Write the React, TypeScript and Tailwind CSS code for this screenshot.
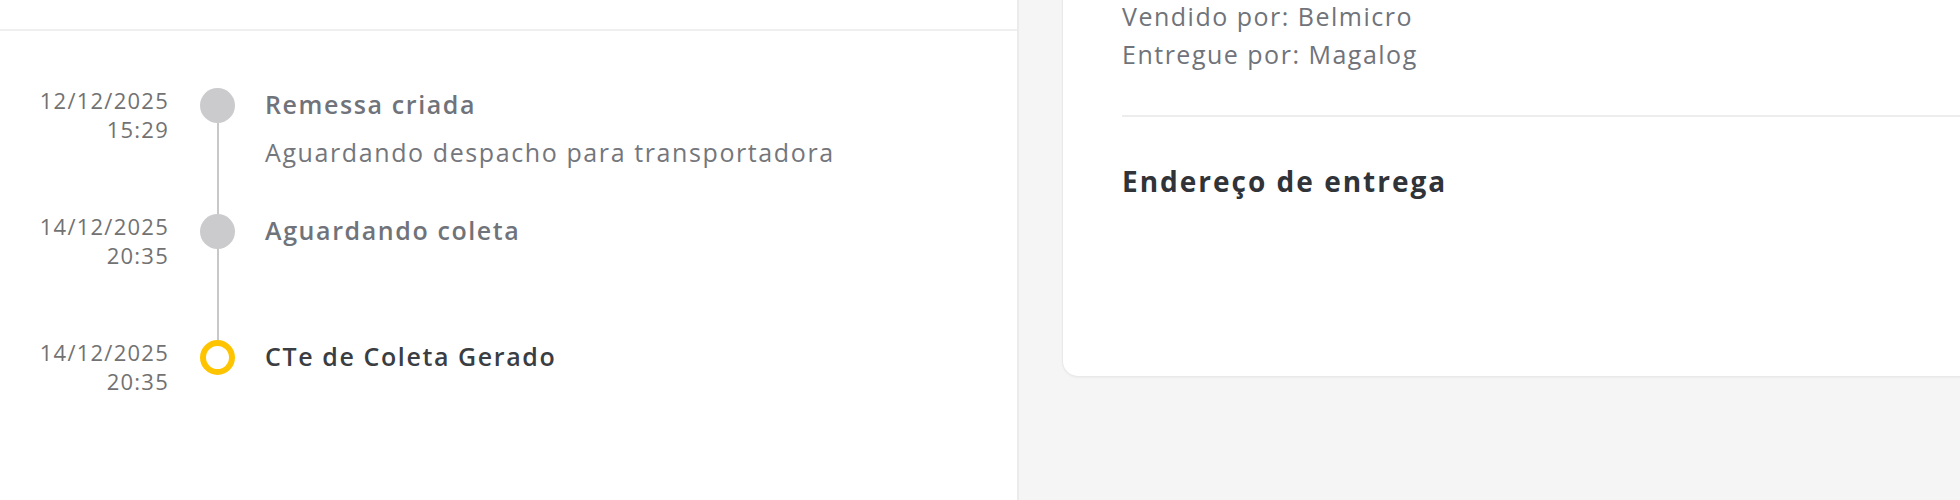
const events = [
  {
    date: "12/12/2025",
    time: "15:29",
    title: "Remessa criada",
    detail: "Aguardando despacho para transportadora",
    current: false,
  },
  { date: "14/12/2025", time: "20:35", title: "Aguardando coleta", current: false },
  { date: "14/12/2025", time: "20:35", title: "CTe de Coleta Gerado", current: true },
];

export default function App() {
  return (
    <div className="flex h-[500px] w-[1960px] overflow-hidden bg-[#f5f5f5] font-['Open_Sans',sans-serif]">
      {/* Tracking timeline */}
      <section className="flex w-[1019px] shrink-0 flex-col border-r-2 border-[#ebebeb] bg-white">
        <div className="h-[31px] shrink-0 border-b-2 border-[#efefef]" />
        <ol className="mt-[57px] flex flex-col">
          {events.map((e, i) => {
            const last = i === events.length - 1;
            return (
              <li key={i} className="flex h-[126px]">
                <div className="-mt-[2px] w-[169px] shrink-0 text-right text-[22px] leading-[29px] tracking-[1.25px] text-[#727272]">
                  <p>{e.date}</p>
                  <p>{e.time}</p>
                </div>
                <div className="ml-[31px] flex w-[35px] shrink-0 flex-col items-center">
                  {e.current ? (
                    <span className="h-[35px] w-[35px] shrink-0 rounded-full border-[6px] border-[#ffc400] bg-white" />
                  ) : (
                    <span className="h-[35px] w-[35px] shrink-0 rounded-full bg-[#cbcbcd]" />
                  )}
                  {!last && <span className="w-[2px] flex-1 bg-[#c8c8c8]" />}
                </div>
                <div className="ml-[30px] flex flex-col text-[25px] leading-[32px] tracking-[1.6px]">
                  <p className={e.current ? "font-semibold text-[#3a3d42]" : "font-semibold text-[#707379]"}>
                    {e.title}
                  </p>
                  {e.detail && <p className="mt-[16px] text-[#74767c]">{e.detail}</p>}
                </div>
              </li>
            );
          })}
        </ol>
      </section>

      {/* Seller / address card */}
      <section className="flex-1">
        <div className="ml-[43px] h-[380px] w-[1000px] rounded-bl-[16px] border border-t-0 border-[#e9e9e9] bg-white pl-[59px] shadow-[0_1px_2px_rgba(0,0,0,0.04)]">
          <div className="-mt-[3px] text-[25px] leading-[38px] tracking-[1.5px] text-[#707379]">
            <p>Vendido por: Belmicro</p>
            <p>Entregue por: Magalog</p>
          </div>
          <div className="mt-[42px] h-[2px] bg-[#ededed]" />
          <h2 className="mt-[46px] text-[28px] font-bold leading-[36px] tracking-[2px] text-[#303338]">
            Endereço de entrega
          </h2>
        </div>
      </section>
    </div>
  );
}
